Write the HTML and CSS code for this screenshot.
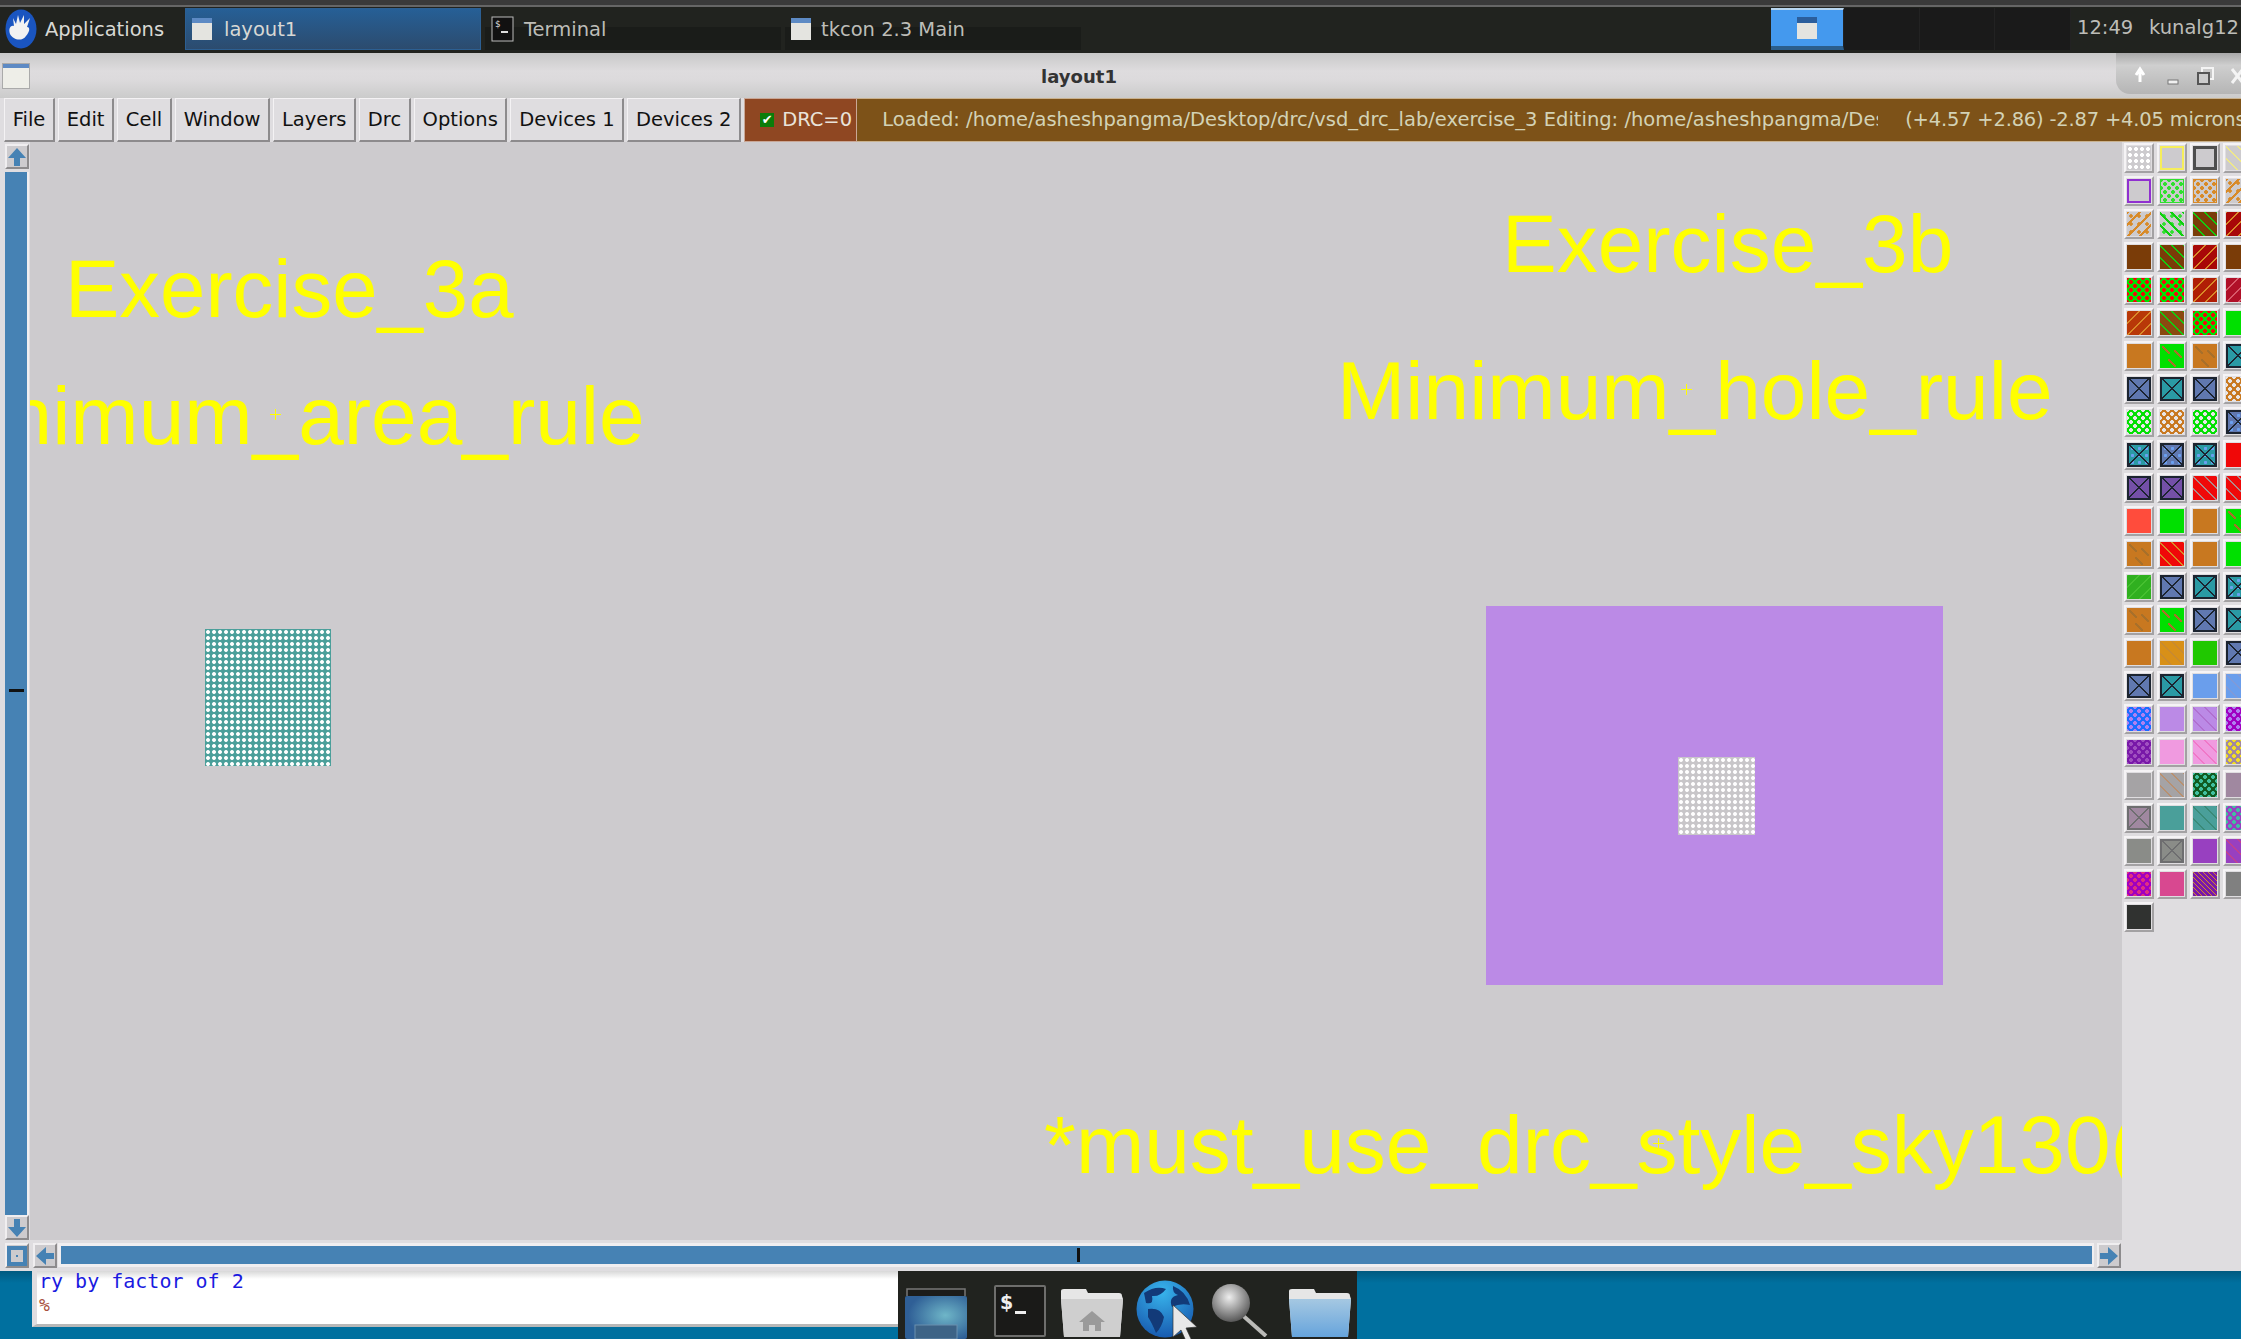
FILE: index.html
```html
<!DOCTYPE html>
<html lang="en">
<head>
    <meta charset="UTF-8">
    <title>layout1</title>
    <link rel="stylesheet" href="styles.css">
</head>
<body>
    <div class="topbar">
        <div class="panel">
            <div class="apps">
                <svg class="logo" width="32" height="40" viewBox="0 0 32 40">
                    <ellipse cx="16" cy="20" rx="15.5" ry="19.5" fill="#1a55c0"/>
                    <path d="M5 25 C3 19 6 16 9 17 L8 9 L11 15 L13 6 L15 14 L19 6 L19 15 L25 9 L22 18 C26 18 24 24 21 27 C17 33 8 31 5 25 Z" fill="#f2f2f2"/>
                </svg>
                <span>Applications</span>
            </div>
            <div class="tab tab-active">
                <svg class="winicon" width="20" height="22" viewBox="0 0 20 22"><rect width="20" height="22" fill="#e4e4e0"/><rect width="20" height="5" fill="#5d8ac4"/></svg>
                <span>layout1</span>
            </div>
            <div class="tab">
                <svg class="termicon" width="23" height="26" viewBox="0 0 23 26"><rect x="1" y="1" width="21" height="24" fill="#111" stroke="#bbb"/><text x="4" y="11" font-size="9" font-family="DejaVu Sans" fill="#ddd">$</text><rect x="10" y="15" width="7" height="2" fill="#ddd"/></svg>
                <span>Terminal</span>
            </div>
            <div class="tab">
                <svg class="winicon" width="20" height="22" viewBox="0 0 20 22"><rect width="20" height="22" fill="#e4e4e0"/><rect width="20" height="5" fill="#5d8ac4"/></svg>
                <span>tkcon 2.3 Main</span>
            </div>
            <div class="pager">
                <div class="desk desk-on"><svg width="20" height="22" viewBox="0 0 20 22"><rect width="20" height="22" fill="#e4e4e0"/><rect width="20" height="6" fill="#2b5e9c"/></svg></div>
                <div class="desk"></div>
                <div class="desk"></div>
                <div class="desk"></div>
            </div>
            <div class="clock">12:49</div>
            <div class="user">kunalg12</div>
        </div>
    </div>

    <div class="window">
        <div class="titlebar">
            <svg class="title-icon" width="28" height="26" viewBox="0 0 28 26"><rect x="0.5" y="0.5" width="27" height="25" fill="#eeeee8" stroke="#aaa"/><rect x="1" y="1" width="26" height="4" fill="#5d8ac4"/></svg>
            <div class="title">layout1</div>
            <div class="winbtns">
                <svg width="125" height="41" viewBox="0 0 125 41">
                    <path d="M24 29 V19 M20 22 L24 16 L28 22" fill="none" stroke="#fff" stroke-width="3"/>
                    <rect x="52" y="27" width="10" height="4" fill="#f0f0f0" stroke="#777"/>
                    <rect x="86" y="15" width="11" height="11" fill="none" stroke="#f4f4f4" stroke-width="2"/>
                    <rect x="82" y="20" width="11" height="11" fill="#ccc" stroke="#555" stroke-width="2"/>
                    <path d="M116 16 L127 30 M127 16 L116 30" stroke="#f4f4f4" stroke-width="3"/>
                </svg>
            </div>
        </div>

        <div class="menubar">
            <div class="menu">File</div>
            <div class="menu">Edit</div>
            <div class="menu">Cell</div>
            <div class="menu">Window</div>
            <div class="menu">Layers</div>
            <div class="menu">Drc</div>
            <div class="menu">Options</div>
            <div class="menu">Devices 1</div>
            <div class="menu">Devices 2</div>
            <div class="drc"><span class="check">✔</span>DRC=0</div>
            <div class="status">
                <div class="status-path">Loaded: /home/asheshpangma/Desktop/drc/vsd_drc_lab/exercise_3 Editing: /home/asheshpangma/Desktop/drc/vsd_drc_lab/exercise_3</div>
                <div class="status-pos">(+4.57 +2.86) -2.87 +4.05 microns</div>
            </div>
        </div>

        <div class="main">
            <div class="vscroll">
                <div class="arrow"><svg width="20" height="20" viewBox="0 0 20 20"><path d="M10 1 L19 11 H13 V19 H7 V11 H1 Z" fill="#4682b4"/></svg></div>
                <div class="vtrack"><div class="vtick"></div></div>
                <div class="arrow"><svg width="20" height="20" viewBox="0 0 20 20"><path d="M10 19 L19 9 H13 V1 H7 V9 H1 Z" fill="#4682b4"/></svg></div>
            </div>

            <div class="canvas">
                <div class="label label-3a">Exercise_3a</div>
                <div class="label label-area">Minimum_area_rule</div>
                <div class="label label-3b">Exercise_3b</div>
                <div class="label label-hole">Minimum_hole_rule</div>
                <div class="label label-must">*must_use_drc_style_sky130(</div>
                <div class="cross cross-area"></div>
                <div class="cross cross-hole"></div>
                <div class="cross cross-must"></div>
                <div class="shape teal-box"></div>
                <div class="shape purple-box"><div class="hole"></div></div>
            </div>

            <div class="palette">
                <div class="sw"><i class="gray dots"></i></div>
                <div class="sw"><i class="gray box-y"></i></div>
                <div class="sw"><i class="gray box-k"></i></div>
                <div class="sw"><i class="gray back s-yel"></i></div>

                <div class="sw"><i class="gray box-p"></i></div>
                <div class="sw"><i class="gray box-g d-green spot"></i></div>
                <div class="sw"><i class="gray box-o d-org spot"></i></div>
                <div class="sw"><i class="gray d-org s-org spot-fwd"></i></div>

                <div class="sw"><i class="gray d-org s-org spot-fwd"></i></div>
                <div class="sw"><i class="gray d-green s-green spot-back"></i></div>
                <div class="sw"><i class="brown back s-green"></i></div>
                <div class="sw"><i class="darkred fwd s-org"></i></div>

                <div class="sw"><i class="brown"></i></div>
                <div class="sw"><i class="brown back s-green"></i></div>
                <div class="sw"><i class="darkred fwd s-org"></i></div>
                <div class="sw"><i class="brown"></i></div>

                <div class="sw"><i class="green d-red spot"></i></div>
                <div class="sw"><i class="green d-red spot"></i></div>
                <div class="sw"><i class="rust fwd s-org"></i></div>
                <div class="sw"><i class="crimson fwd s-pink"></i></div>

                <div class="sw"><i class="rust2 fwd s-org"></i></div>
                <div class="sw"><i class="brown2 back s-green"></i></div>
                <div class="sw"><i class="green d-red spot"></i></div>
                <div class="sw"><i class="green"></i></div>

                <div class="sw"><i class="orange"></i></div>
                <div class="sw"><i class="green dash"></i></div>
                <div class="sw"><i class="orange dash"></i></div>
                <div class="sw"><i class="teal con"></i></div>

                <div class="sw"><i class="blue con"></i></div>
                <div class="sw"><i class="teal con"></i></div>
                <div class="sw"><i class="blue con"></i></div>
                <div class="sw"><i class="orange d-white spot"></i></div>

                <div class="sw"><i class="green d-white spot"></i></div>
                <div class="sw"><i class="orange d-white spot"></i></div>
                <div class="sw"><i class="green d-white spot"></i></div>
                <div class="sw"><i class="blue con dotted"></i></div>

                <div class="sw"><i class="teal con dotted"></i></div>
                <div class="sw"><i class="blue con dotted"></i></div>
                <div class="sw"><i class="teal con dotted"></i></div>
                <div class="sw"><i class="red"></i></div>

                <div class="sw"><i class="violet con"></i></div>
                <div class="sw"><i class="violet con"></i></div>
                <div class="sw"><i class="red back s-gray"></i></div>
                <div class="sw"><i class="red back s-gray"></i></div>

                <div class="sw"><i class="coral"></i></div>
                <div class="sw"><i class="green"></i></div>
                <div class="sw"><i class="orange"></i></div>
                <div class="sw"><i class="green dash"></i></div>

                <div class="sw"><i class="orange dash"></i></div>
                <div class="sw"><i class="red back s-org"></i></div>
                <div class="sw"><i class="orange"></i></div>
                <div class="sw"><i class="green"></i></div>

                <div class="sw"><i class="grass fwd s-grass"></i></div>
                <div class="sw"><i class="blue con"></i></div>
                <div class="sw"><i class="teal con"></i></div>
                <div class="sw"><i class="teal con dotted"></i></div>

                <div class="sw"><i class="orange dash"></i></div>
                <div class="sw"><i class="green dash"></i></div>
                <div class="sw"><i class="blue con"></i></div>
                <div class="sw"><i class="teal con"></i></div>

                <div class="sw"><i class="orange"></i></div>
                <div class="sw"><i class="amber back s-amber"></i></div>
                <div class="sw"><i class="lime"></i></div>
                <div class="sw"><i class="blue con"></i></div>

                <div class="sw"><i class="blue con"></i></div>
                <div class="sw"><i class="teal con"></i></div>
                <div class="sw"><i class="sky"></i></div>
                <div class="sw"><i class="sky back s-sky"></i></div>

                <div class="sw"><i class="royal d-lilac spot"></i></div>
                <div class="sw"><i class="lilac"></i></div>
                <div class="sw"><i class="lilac back s-lilac"></i></div>
                <div class="sw"><i class="magenta d-lilac spot"></i></div>

                <div class="sw"><i class="plum d-mauve spot"></i></div>
                <div class="sw"><i class="pink"></i></div>
                <div class="sw"><i class="pink back s-rose"></i></div>
                <div class="sw"><i class="mauve d-yel spot"></i></div>

                <div class="sw"><i class="silver"></i></div>
                <div class="sw"><i class="silver back s-tan"></i></div>
                <div class="sw"><i class="forest d-teal spot"></i></div>
                <div class="sw"><i class="mauve"></i></div>

                <div class="sw"><i class="mauve con-soft"></i></div>
                <div class="sw"><i class="tealsolid"></i></div>
                <div class="sw"><i class="tealsolid back s-teal"></i></div>
                <div class="sw"><i class="grape d-teal spot"></i></div>

                <div class="sw"><i class="slate"></i></div>
                <div class="sw"><i class="slate con-soft"></i></div>
                <div class="sw"><i class="grape"></i></div>
                <div class="sw"><i class="grape back s-rose2"></i></div>

                <div class="sw"><i class="magenta d-rose spot"></i></div>
                <div class="sw"><i class="rose"></i></div>
                <div class="sw"><i class="plum dense s-org"></i></div>
                <div class="sw"><i class="graphite"></i></div>

                <div class="sw"><i class="ink"></i></div>
            </div>

            <div class="hscroll">
                <div class="arrow corner"><svg width="20" height="20" viewBox="0 0 20 20"><path d="M0 0 H20 V20 H0 Z M4 4 V16 H16 V4 Z" fill="#4682b4"/><rect x="9" y="9" width="2" height="2" fill="#4682b4"/></svg></div>
                <div class="arrow"><svg width="20" height="20" viewBox="0 0 20 20"><path d="M1 10 L11 1 V7 H19 V13 H11 V19 Z" fill="#4682b4"/></svg></div>
                <div class="htrack"><div class="htick"></div></div>
                <div class="arrow"><svg width="20" height="20" viewBox="0 0 20 20"><path d="M19 10 L9 1 V7 H1 V13 H9 V19 Z" fill="#4682b4"/></svg></div>
            </div>
        </div>
    </div>

    <div class="desktop">
        <div class="console">
            <div class="console-out">ry by factor of 2</div>
            <div class="console-prompt">%</div>
        </div>
        <div class="dock">
            <svg class="dock-desk" width="62" height="52" viewBox="0 0 62 52">
                <defs><radialGradient id="deskglow" cx="0.65" cy="0.45" r="0.6"><stop offset="0" stop-color="#6fb6c8"/><stop offset="1" stop-color="#2f5f96"/></radialGradient></defs>
                <path d="M2 9 V2 H60 V9" fill="#1c1c1a" stroke="#777" stroke-width="1.5"/>
                <rect y="9" width="62" height="43" rx="2" fill="url(#deskglow)"/>
                <rect x="10" y="38" width="42" height="14" fill="#3d6386" stroke="#6b8fae"/>
            </svg>
            <svg class="dock-term" width="52" height="52" viewBox="0 0 52 52">
                <rect x="1" y="1" width="50" height="50" rx="1" fill="#1a1a18" stroke="#6e6e6c" stroke-width="2"/>
                <text x="6" y="24" font-size="19" font-weight="bold" font-family="DejaVu Sans" fill="#eee">$</text>
                <rect x="21" y="26" width="11" height="3" fill="#eee"/>
            </svg>
            <svg class="dock-home" width="62" height="50" viewBox="0 0 62 50">
                <path d="M3 50 L0 12 V4 Q0 2 3 2 H25 L27 6 H58 Q61 6 61 9 L62 12 L59 50 Z" fill="#e6e6e6"/>
                <path d="M0 12 H62 L59 50 H3 Z" fill="#cfcfcf"/>
                <path d="M31 24 L44 35 H40 V44 H34 V38 H28 V44 H22 V35 H18 Z" fill="#9a9a9a"/>
            </svg>
            <svg class="dock-globe" width="58" height="60" viewBox="0 0 58 60">
                <defs><radialGradient id="globe" cx="0.45" cy="0.2" r="0.9"><stop offset="0" stop-color="#38b4ec"/><stop offset="1" stop-color="#1450a8"/></radialGradient></defs>
                <circle cx="29" cy="30" r="28.5" fill="url(#globe)"/>
                <path d="M8 14 Q20 6 30 10 Q24 18 16 17 Q18 26 10 24 Z M37 7 Q50 12 54 26 Q44 24 36 28 Q32 18 42 16 Q36 14 37 7 Z M12 30 Q24 28 28 38 Q26 48 20 54 Q16 44 12 38 Z M42 38 Q50 36 50 42 Q46 48 40 50 Z" fill="#123a78"/>
            </svg>
            <svg class="dock-find" width="58" height="54" viewBox="0 0 58 54">
                <defs><radialGradient id="lens" cx="0.45" cy="0.35" r="0.7"><stop offset="0" stop-color="#eeeeee"/><stop offset="1" stop-color="#4c4c4c"/></radialGradient></defs>
                <path d="M30 30 L56 53" stroke="#bbbbb8" stroke-width="4"/>
                <circle cx="21" cy="20" r="19" fill="url(#lens)"/>
            </svg>
            <svg class="dock-folder" width="62" height="50" viewBox="0 0 62 50">
                <defs><linearGradient id="folder" x1="0" y1="0" x2="0" y2="1"><stop offset="0" stop-color="#a5c8e2"/><stop offset="1" stop-color="#66a4dc"/></linearGradient></defs>
                <path d="M3 50 L0 12 V4 Q0 2 3 2 H25 L27 6 H58 Q61 6 61 9 L62 12 L59 50 Z" fill="#e6e6e6"/>
                <path d="M0 12 H62 L59 50 H3 Z" fill="url(#folder)"/>
            </svg>
            <svg class="pointer" width="26" height="36" viewBox="0 0 26 36"><path d="M1 0 V32 L9 25 L14 36 L20 36 L14 23 L25 22 Z" fill="#e8e8e8" stroke="#333" stroke-width="0.7"/></svg>
        </div>
    </div>
</body>
</html>
```

FILE: styles.css
```css
html, body {
    margin: 0;
    padding: 0;
}
body {
    width: 2241px;
    height: 1339px;
    overflow: hidden;
    background: #006f9f;
    font-family: "DejaVu Sans", sans-serif;
    font-size: 19.5px;
}

/* top panel */
.topbar {
    height: 53px;
    box-sizing: border-box;
    background: #3a3a3a;
    padding-top: 5px;
}
.panel {
    height: 48px;
    box-sizing: border-box;
    border-top: 2px solid #666;
    background: #21231f;
    display: flex;
    align-items: flex-start;
    color: #bdbdb8;
    padding-left: 5px;
    white-space: nowrap;
}
.apps {
    flex: none;
    width: 180px;
    display: flex;
    align-items: center;
    height: 42px;
    gap: 8px;
    color: #d8d8d4;
    margin-top: 1px;
}
.tab {
    flex: none;
    width: 296px;
    height: 42px;
    margin-right: 4px;
    margin-top: 1px;
    box-sizing: border-box;
    padding-left: 6px;
    display: flex;
    align-items: center;
    gap: 10px;
    background: linear-gradient(#21231f 45%, #1a1c19 45%);
}
.tab-active {
    background: linear-gradient(#265f96, #2c4b6e);
    border: 1px solid #2c5f92;
    color: #d8d8d4;
    gap: 12px;
}
.pager {
    flex: none;
    margin-top: 1px;
    margin-left: 686px;
    display: flex;
    width: 300px;
    height: 42px;
}
.desk {
    flex: 1;
    background: #1a1a1a;
    border-right: 1px solid #222;
}
.desk-on {
    flex: none;
    width: 73px;
    box-sizing: border-box;
    background: #4499ee;
    border-top: 2px solid #b8d6f0;
    border-bottom: 4px solid #2b5e8c;
    display: flex;
    align-items: center;
    justify-content: center;
}
.clock {
    flex: none;
    width: 72px;
    margin-left: 6px;
    line-height: 42px;
}
.user {
    flex: none;
    line-height: 42px;
}

/* window */
.window {
    height: 1218px;
    background: #dfdde0;
    display: flex;
    flex-direction: column;
}
.titlebar {
    height: 45px;
    background: linear-gradient(#c9c9c9, #dedcde 40%, #dcdadc 60%, #cbcbcb);
    display: flex;
    align-items: flex-start;
}
.title-icon {
    flex: none;
    margin: 10px 0 0 2px;
}
.title {
    flex: none;
    width: 2098px;
    text-align: center;
    font-weight: bold;
    font-size: 18px;
    line-height: 48px;
    color: #333;
}
.winbtns {
    flex: none;
    width: 125px;
    height: 41px;
    margin-left: -12px;
    border-bottom-left-radius: 14px;
    background: linear-gradient(#a8a8a8, #cfcfcf 30%, #b5b5b5);
    overflow: hidden;
}
.menubar {
    height: 44px;
    box-sizing: border-box;
    background: #dfdde0;
    display: flex;
    gap: 3px;
    padding-left: 4px;
    white-space: nowrap;
}
.menu {
    padding: 0 7.7px;
    line-height: 42px;
    box-sizing: border-box;
    background: #dfdde0;
    color: #111;
    border: 1px solid;
    border-color: #f4f2f4 #8d8b8d #8d8b8d #f4f2f4;
    border-bottom-width: 2px;
    border-right-width: 2px;
}
.drc {
    flex: none;
    width: 113px;
    margin-right: -3px;
    box-sizing: border-box;
    background: #8f4722;
    color: #e9e3da;
    line-height: 44px;
    border: 1px solid #c9a796;
    display: flex;
    align-items: center;
    padding-left: 15px;
    gap: 8px;
}
.check {
    width: 14px;
    height: 14px;
    background: #0a7d0a;
    color: #fff;
    font-size: 13px;
    line-height: 14px;
    text-align: center;
    font-weight: bold;
}
.status {
    flex: 1;
    min-width: 0;
    display: flex;
    background: #7d5218;
    color: #d3d2b6;
    border-top: 1px solid #c9b28f;
    border-bottom: 1px solid #c9b28f;
    box-sizing: border-box;
    padding-left: 25px;
    line-height: 42px;
    overflow: hidden;
}
.status-path {
    width: 996px;
    overflow: hidden;
    flex: none;
}
.status-pos {
    flex: none;
    margin-left: 27px;
    letter-spacing: -0.2px;
}
.main {
    flex: 1;
    display: grid;
    grid-template-columns: 30px 2092px 1fr;
    grid-template-rows: 1098px 31px;
    overflow: hidden;
}
.vscroll {
    padding-left: 5px;
    padding-top: 2px;
    box-sizing: border-box;
    display: flex;
    flex-direction: column;
    gap: 3px;
}
.arrow {
    flex: none;
    width: 24px;
    height: 25px;
    box-sizing: border-box;
    background: #cdcbce;
    border: 2px solid;
    border-color: #f0eef0 #8d8b8d #8d8b8d #f0eef0;
    display: flex;
    align-items: center;
    justify-content: center;
}
.vtrack {
    flex: 1;
    width: 22px;
    background: #4682b4;
    border-right: 2px solid #f0eef0;
    display: flex;
    align-items: center;
    justify-content: center;
    margin-bottom: -3px;
}
.vtick {
    width: 15px;
    height: 3px;
    margin-bottom: 7px;
    background: #111;
}
.canvas {
    position: relative;
    background: #cdcbce;
    overflow: hidden;
}
.label {
    position: absolute;
    font-family: "Liberation Sans", sans-serif;
    font-size: 82px;
    line-height: 1;
    color: #ffff00;
    white-space: nowrap;
}
.label-3a { left: 35px; top: 106px; font-size: 81.5px; }
.label-area { left: -110px; top: 233px; }
.label-3b { left: 1472px; top: 61px; }
.label-hole { left: 1307px; top: 208px; }
.label-must { left: 1014px; top: 962px; }
.cross {
    position: absolute;
    width: 11px;
    height: 11px;
    background:
        linear-gradient(#ffff00, #ffff00) center / 11px 1px no-repeat,
        linear-gradient(#ffff00, #ffff00) center / 1px 11px no-repeat;
}
.cross-area { left: 240px; top: 267px; }
.cross-hole { left: 1651px; top: 242px; }
.cross-must { left: 1623px; top: 996px; }
.shape {
    position: absolute;
}
.teal-box {
    left: 175px;
    top: 487px;
    width: 126px;
    height: 137px;
    background: #4a9f9a radial-gradient(circle at 3px 3px, #fff 1.5px, rgba(255,255,255,0.15) 2.2px, transparent 2.6px) 0 0 / 6px 6px;
}
.purple-box {
    left: 1456px;
    top: 464px;
    width: 457px;
    height: 379px;
    background: #bb8ae6;
}
.hole {
    margin: 151px 0 0 192px;
    width: 77px;
    height: 78px;
    background: #c8c6c9 radial-gradient(circle at 3px 3px, #fff 1.5px, rgba(255,255,255,0.15) 2.2px, transparent 2.6px) 0 0 / 6px 6px;
}

/* layer palette */
.palette {
    grid-column: 3;
    grid-row: 1 / span 2;
    padding: 1px 0 0 2px;
    display: grid;
    grid-template-columns: repeat(4, 30px);
    grid-auto-rows: 30px;
    gap: 3px;
    overflow: hidden;
    align-content: start;
}
.sw {
    box-sizing: border-box;
    border: 2px solid;
    border-color: #f5f3f5 #a3a1a3 #a3a1a3 #f5f3f5;
    padding: 1px;
    background: #dfdde0;
}
.sw i {
    display: block;
    box-sizing: border-box;
    width: 24px;
    height: 24px;
}

/* layer colours */
.gray { background-color: #cdcbce; }
.brown { background-color: #7a3c08; }
.brown2 { background-color: #8a4a10; }
.darkred { background-color: #a80808; }
.rust { background-color: #b01e06; }
.rust2 { background-color: #b83808; }
.crimson { background-color: #b01028; }
.green { background-color: #00e000; }
.orange { background-color: #c87820; }
.teal { background-color: #2a9aa4; }
.blue { background-color: #6078b0; }
.violet { background-color: #7450a8; }
.red { background-color: #f00808; }
.coral { background-color: #ff4c3c; }
.grass { background-color: #30b020; }
.amber { background-color: #d89018; }
.lime { background-color: #20c800; }
.sky { background-color: #6a9eec; }
.royal { background-color: #1a6cff; }
.lilac { background-color: #bb8ae6; }
.magenta { background-color: #a000c0; }
.plum { background-color: #7818a8; }
.pink { background-color: #f09ae0; }
.mauve { background-color: #a088a0; }
.silver { background-color: #a5a3a5; }
.forest { background-color: #105a20; }
.tealsolid { background-color: #4a9f9a; }
.grape { background-color: #9840c0; }
.slate { background-color: #8a8c88; }
.rose { background-color: #d84890; }
.graphite { background-color: #808080; }
.ink { background-color: #303230; }

/* stroke and dot colours used by the patterns */
.s-yel { --s: #efe88a; }
.s-org { --s: #d88a28; }
.s-green { --s: #10d010; }
.s-pink { --s: #d85a6a; }
.s-gray { --s: #b08888; }
.s-grass { --s: #46c030; }
.s-amber { --s: #c88a30; }
.s-sky { --s: #7f9ad8; }
.s-lilac { --s: #b070d0; }
.s-rose { --s: #f078c8; }
.s-rose2 { --s: #c04090; }
.s-tan { --s: #b89070; }
.s-teal { --s: #3a8a78; }
.d-green { --d: #30e030; }
.d-org { --d: #d88a28; }
.d-red { --d: #f00808; }
.d-white { --d: #e8e6e8; }
.d-lilac { --d: #b080f0; }
.d-mauve { --d: #a050c0; }
.d-yel { --d: #f4e020; }
.d-teal { --d: #40c0a0; }
.d-rose { --d: #e03080; }

/* layer patterns */
.dots {
    background-image: radial-gradient(circle, #fff 1.8px, transparent 2.2px);
    background-size: 6px 6px;
}
.spot {
    background-image:
        radial-gradient(circle, var(--d) 1.6px, transparent 2.2px),
        radial-gradient(circle, var(--d) 1.6px, transparent 2.2px);
    background-size: 8px 8px;
    background-position: 0 0, 4px 4px;
}
.back {
    background-image: repeating-linear-gradient(45deg, transparent 0 7.3px, var(--s) 7.3px 8.5px);
}
.fwd {
    background-image: repeating-linear-gradient(-45deg, transparent 0 7.3px, var(--s) 7.3px 8.5px);
}
.dense {
    background-image: repeating-linear-gradient(45deg, transparent 0 2.5px, var(--s) 2.5px 3.5px);
}
.spot-fwd {
    background-image:
        repeating-linear-gradient(-45deg, transparent 0 7px, var(--s) 7px 8.5px),
        radial-gradient(circle, var(--d) 1.5px, transparent 2px);
    background-size: auto, 8px 8px;
}
.spot-back {
    background-image:
        repeating-linear-gradient(45deg, transparent 0 7px, var(--s) 7px 8.5px),
        radial-gradient(circle, var(--d) 1.5px, transparent 2px);
    background-size: auto, 8px 8px;
}
.dash {
    background-image:
        linear-gradient(45deg, transparent 42%, #a8702a 42% 58%, transparent 58%),
        linear-gradient(45deg, transparent 42%, #a8702a 42% 58%, transparent 58%),
        linear-gradient(45deg, transparent 42%, #a8702a 42% 58%, transparent 58%);
    background-size: 8px 8px;
    background-repeat: no-repeat;
    background-position: 2px 2px, 14px 6px, 8px 15px;
}
.con {
    border: 2px solid #1c2430;
    background-image:
        linear-gradient(45deg, transparent 48%, #1c2430 48% 53%, transparent 53%),
        linear-gradient(-45deg, transparent 48%, #1c2430 48% 53%, transparent 53%);
}
.con.dotted {
    background-image:
        linear-gradient(45deg, transparent 48%, #1c2430 48% 53%, transparent 53%),
        linear-gradient(-45deg, transparent 48%, #1c2430 48% 53%, transparent 53%),
        radial-gradient(circle, #6aa0f0 1.3px, transparent 1.9px);
    background-size: auto, auto, 7px 7px;
}
.con-soft {
    border: 2px solid #6e6e70;
    background-image:
        linear-gradient(45deg, transparent 48%, #6e6e70 48% 53%, transparent 53%),
        linear-gradient(-45deg, transparent 48%, #6e6e70 48% 53%, transparent 53%);
}
.box-y { border: 2px solid #f6ee5a; }
.box-k { border: 3px solid #4e4e4e; }
.box-p { border: 2px solid #9030d0; }
.box-g { border: 1px solid #30e030; }
.box-o { border: 1px solid #d88a28; }

/* bottom scrollbar */
.hscroll {
    grid-column: 1 / span 2;
    grid-row: 2;
    display: flex;
    padding: 3px 1px 0 5px;
    gap: 4px;
    box-sizing: border-box;
}
.htrack {
    flex: 1;
    height: 24px;
    margin: 0 -1px 0 -3px;
    box-sizing: border-box;
    background: #4682b4;
    border: 3px solid #f0eef0;
    border-right-width: 2px;
    display: flex;
    align-items: center;
    justify-content: center;
}
.htick {
    width: 3px;
    height: 14px;
    margin-left: 3px;
    background: #111;
}

/* desktop */
.desktop {
    height: 68px;
    display: flex;
    align-items: flex-start;
    background: linear-gradient(#005a80, #00709f 12px);
    padding-left: 32px;
}
.console {
    width: 866px;
    height: 56px;
    box-sizing: border-box;
    background: linear-gradient(#d8d8d8, #fff 8px);
    border-left: 5px solid #dfdde0;
    border-bottom: 3px solid #b8b8b8;
    font-family: "DejaVu Sans Mono", monospace;
    font-size: 20px;
    padding-left: 2px;
}
.console-out {
    color: #1a1ae0;
    line-height: 20px;
}
.console-prompt {
    color: #a85040;
    font-size: 18px;
    line-height: 28px;
}
.dock {
    position: relative;
    width: 459px;
    height: 68px;
    background: #21231f;
    display: flex;
    align-items: flex-end;
    padding-bottom: 2px;
    box-sizing: border-box;
}
.dock-desk { margin: 0 0 -2px 7px; }
.dock-term { margin-left: 27px; }
.dock-home { margin-left: 15px; }
.dock-globe { margin: 0 0 -2px 13px; }
.dock-find { margin-left: 16px; }
.dock-folder { margin-left: 21px; }
.pointer {
    position: absolute;
    left: 274px;
    top: 34px;
}
```
